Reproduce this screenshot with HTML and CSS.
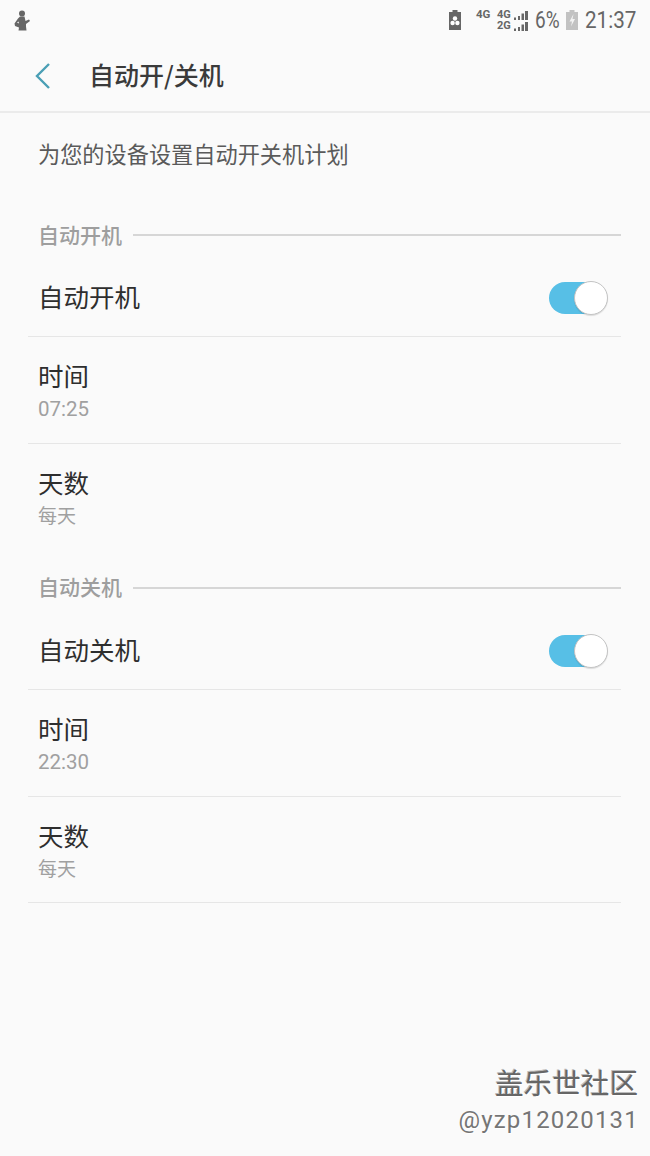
FILE: index.html
```html
<!DOCTYPE html>
<html lang="zh">
<head>
<meta charset="utf-8">
<title>自动开/关机</title>
<link rel="stylesheet" href="styles.css">
</head>
<body>
<div class="status">
  <svg class="st-left" width="16" height="21" viewBox="0 0 16 21"><circle cx="8" cy="3.500" r="3" fill="#666"/><path d="M6 6.500h4.500l1 4.500 3.500-1.500 1 1.500-4 3v2.500l.5 4H4.500l.5-3-4-1.500-.5-2.500L4 8.500z" fill="#666"/><path d="M4.500 11.500 3 12.500l2 1z" fill="#fff"/></svg>
  <div class="st-right">
    <svg class="ic-bat" width="12" height="20" viewBox="0 0 12 20"><path d="M3.500 0h5v2H12v18H0V2h3.500z" fill="#666"/><circle cx="6" cy="8.500" r="2.200" fill="#fff"/><circle cx="3.600" cy="13" r="2.200" fill="#fff"/><circle cx="8.400" cy="13" r="2.200" fill="#fff"/></svg>
    <span class="net-a">4G</span>
    <span class="net-stack">
      <span class="net-row">4G<svg width="17" height="10" viewBox="0 0 17 10"><path d="M3 7.500h2V10H3zM7 6h2v4H7zM10.500 3.500H13V10h-2.500zM14 1h3v9h-3z" fill="#666"/></svg></span>
      <span class="net-row">2G<svg width="17" height="10" viewBox="0 0 17 10"><path d="M3 7.500h2V10H3zM7 6h2v4H7zM10.500 3.500H13V10h-2.500zM14 1h3v9h-3z" fill="#666"/></svg></span>
    </span>
    <span class="pct">6%</span>
    <svg class="ic-bat2" width="12" height="20" viewBox="0 0 12 20"><path d="M3.500 0h5v2H12v18H0V2h3.500z" fill="#c2c2c2"/><path d="M7.500 4 3.500 11.500h2.500L5 16.500 9 9H6.500z" fill="#f2f2f2"/></svg>
    <span class="clock">21:37</span>
  </div>
</div>

<header class="appbar">
  <svg class="back" width="18" height="28" viewBox="0 0 18 28"><path d="M15 2 3 14l12 12" fill="none" stroke="#4a9fb5" stroke-width="2.400"/></svg>
  <h1 class="title">自动开/关机</h1>
</header>

<p class="desc">为您的设备设置自动开关机计划</p>

<section class="group">
  <div class="cat"><span class="cat-label">自动开机</span><span class="cat-line"></span></div>
  <div class="row row-switch"><span class="row-main">自动开机</span><span class="switch"><span class="knob"></span></span></div>
  <div class="row row-two"><span class="row-main">时间</span><span class="row-sub row-time">07:25</span></div>
  <div class="row row-two last"><span class="row-main">天数</span><span class="row-sub">每天</span></div>
</section>

<section class="group group-b">
  <div class="cat"><span class="cat-label">自动关机</span><span class="cat-line"></span></div>
  <div class="row row-switch"><span class="row-main">自动关机</span><span class="switch"><span class="knob"></span></span></div>
  <div class="row row-two"><span class="row-main">时间</span><span class="row-sub row-time">22:30</span></div>
  <div class="row row-two end"><span class="row-main">天数</span><span class="row-sub">每天</span></div>
</section>

<div class="watermark">
  <div class="wm-a">盖乐世社区</div>
  <div class="wm-b">@yzp12020131</div>
</div>
</body>
</html>
```
FILE: styles.css
```css
* { box-sizing: border-box; }
html, body { margin: 0; padding: 0; }
body {
  width: 650px;
  height: 1156px;
  background: #fafafa;
  font-family: "Noto Sans CJK SC", "Roboto", sans-serif;
  color: #303030;
  position: relative;
  overflow: hidden;
}
.status {
  height: 40px;
  display: flex;
  align-items: center;
  justify-content: space-between;
  padding: 0 14px;
}
.st-right { display: flex; align-items: center; color: #666; }
.ic-bat { flex: none; }
.net-a { font: 700 11.500px/1 "Roboto", sans-serif; width: 14px; margin: 0 7px 10px 15px; white-space: nowrap; }
.net-stack { display: flex; flex-direction: column; font: 700 11px/11px "Roboto", sans-serif; width: 31px; margin-right: 7px; }
.net-row { display: flex; align-items: center; height: 11px; white-space: nowrap; }
.pct, .clock {
  font: 400 24px/1 "Roboto", sans-serif;
  display: inline-block;
  transform-origin: left center;
  white-space: nowrap;
}
.pct { width: 24px; margin-right: 7px; transform: scaleX(.79); }
.clock { width: 51px; margin-left: 7px; transform: scaleX(.86); }
.appbar {
  height: 73px;
  display: flex;
  align-items: center;
  padding-left: 34px;
  border-bottom: 2px solid #ebebeb;
}
.back { flex: none; }
.title {
  margin: 0 0 4px 37px;
  font-size: 25px;
  font-weight: 500;
  line-height: 32px;
  color: #3a3a3a;
}
.desc {
  margin: 0;
  padding: 25px 0 0 38px;
  height: 103px;
  font-size: 22.200px;
  line-height: 30px;
  color: #5a5a5a;
}
.group { padding: 0 29px 0 28px; }
.group-b { margin-top: 17px; }
.group-b .cat { height: 39px; }
.cat { height: 38px; display: flex; align-items: center; padding-left: 10px; }
.cat-label { font-size: 21px; font-weight: 500; color: #9e9e9e; line-height: 28px; margin-bottom: 3px; }
.cat-line { flex: 1; height: 2px; background: #d6d6d6; margin-left: 11px; }
.row { border-bottom: 1px solid #e6e6e6; display: flex; }
.row-switch {
  height: 83px;
  align-items: center;
  justify-content: space-between;
  padding: 6px 14px 0 10px;
}
.row-switch .row-main { margin-bottom: 4px; }
.row-two { height: 107px; flex-direction: column; padding: 20px 0 0 10px; }
.row-two.last { border-bottom: none; }
.row-two.end { height: 106px; }
.row-main { font-size: 25.500px; line-height: 36px; color: #2e2e2e; }
.row-sub { font-size: 19px; line-height: 26px; color: #a0a0a0; margin-top: 2px; }
.row-time { font-family: "Roboto", sans-serif; font-size: 20.500px; margin-top: 3px; }
.switch { width: 58px; height: 32px; border-radius: 16px; background: #57bfe6; position: relative; display: block; }
.knob {
  position: absolute;
  right: -1px; top: -1px;
  width: 34px; height: 34px;
  border-radius: 50%;
  background: #fff;
  border: 1px solid #c4c4c4;
  box-shadow: 0 1px 1px rgba(0,0,0,.12);
}
.watermark { position: absolute; right: 12px; top: 1063px; text-align: right; color: #757575; }
.wm-a { font-size: 28.600px; font-weight: 400; line-height: 38px; color: #666; text-shadow: 1px 1px 0 #fff, -1px -1px 0 #bbb; }
.wm-b { font: 400 24px/32px "Roboto", sans-serif; letter-spacing: 1.200px; margin-top: 3px; margin-right: -1px; text-shadow: 1px 1px 0 #fff; }
```
